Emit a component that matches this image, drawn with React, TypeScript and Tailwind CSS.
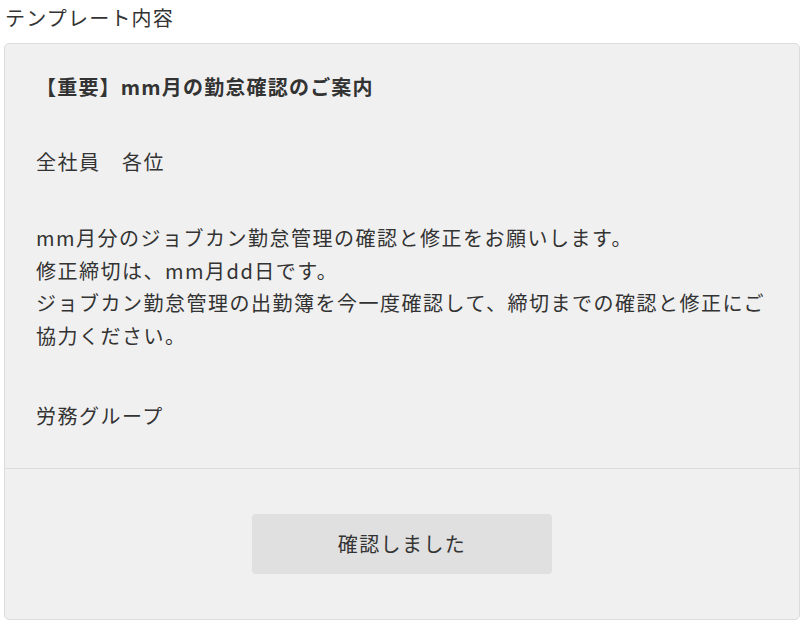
import React from 'react';

const lines = [
  'mm月分のジョブカン勤怠管理の確認と修正をお願いします。',
  '修正締切は、mm月dd日です。',
  'ジョブカン勤怠管理の出勤簿を今一度確認して、締切までの確認と修正にご協力ください。',
];

const App: React.FC = () => {
  return (
    <div
      className="min-h-screen bg-white px-[4px] text-[#333]"
      style={{ fontFamily: '"Noto Sans CJK JP", "Noto Sans", sans-serif' }}
    >
      <h2 className="pl-[1px] pt-[3px] text-[20px] leading-[30px] tracking-[0.06em]">テンプレート内容</h2>
      <div className="mt-[10px] w-[796px] rounded-[5px] border border-[#dcdcdc] bg-[#f0f0f0]">
        <div className="px-[31px] pt-[27px] pb-[35px] text-[20px] leading-[32.5px] tracking-[0.075em]">
          <p className="font-bold tracking-[0.06em]">【重要】mm月の勤怠確認のご案内</p>
          <p className="mt-[42px]">全社員　各位</p>
          <div className="mt-[44px]">
            {lines.map((l) => (
              <p key={l}>{l}</p>
            ))}
          </div>
          <p className="mt-[48px]">労務グループ</p>
        </div>
        <div className="flex justify-center border-t border-[#dcdcdc] py-[45px]">
          <button className="h-[60px] w-[300px] rounded-[4px] bg-[#e0e0e0] text-[20px] tracking-[0.07em] text-[#333]">
            確認しました
          </button>
        </div>
      </div>
    </div>
  );
};

export default App;
